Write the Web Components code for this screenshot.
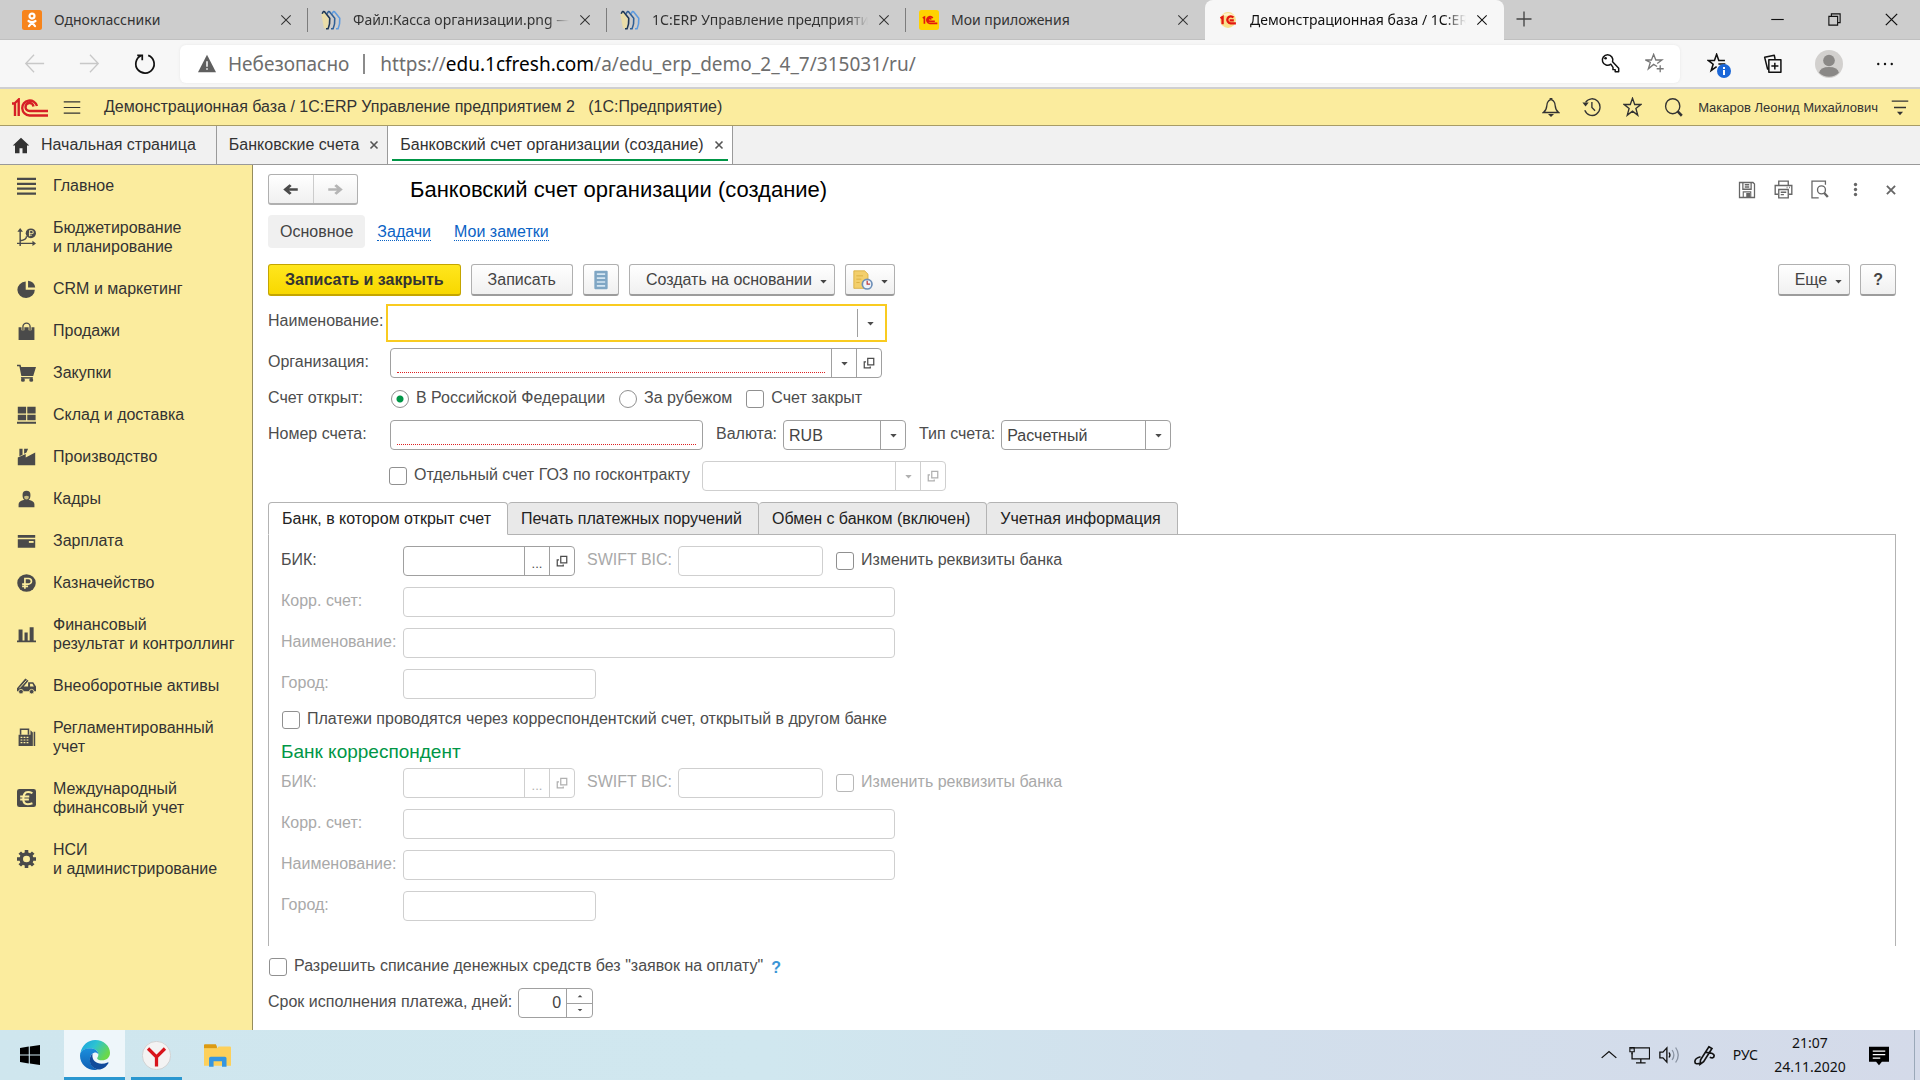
<!DOCTYPE html>
<html lang="ru">
<head>
<meta charset="utf-8">
<title>Банковский счет организации (создание)</title>
<style>
html,body{margin:0;background:#fff}
body{font-family:"Liberation Sans",Arial,sans-serif;font-size:16px;color:#333}
</style>
</head>
<body>
<desktop-screen></desktop-screen>
<script>
const ICONS = {
  ok:'<rect width="24" height="24" rx="3" fill="#f7841b"/><g fill="none" stroke="#fff" stroke-width="2.6" stroke-linecap="round"><circle cx="12" cy="7.3" r="3"/><path d="M7.8 13.2q4.2 2.6 8.4 0M12 15l-3.6 4.4M12 15l3.6 4.4"/></g>',
  books:'<path d="M.5 5.500L3 1.500l6.500 9L8 23l-4.500-1z" fill="#e9dca8"/><g fill="none" stroke-width="1.900"><path d="M1.500 4.500Q3 0 5 3l5.500 7Q11 17 8.500 22.500H6" stroke="#1d3654"/><path d="M7.500 4.500Q9 0 11 3l5.500 7Q17 17 14.500 22.500H12" stroke="#2f5f96"/><path d="M13.500 4.500Q15 0 17 3l5.500 7Q23 17 20.500 22.500H18" stroke="#5d9be0"/></g>',
  c1y:'<rect width="24" height="24" rx="3" fill="#ffd200"/><g fill="none" stroke="#e3170f" stroke-width="2"><path d="M4.500 9.500l2-1v8M16.500 9.500a4 4 0 1 0-3.500 6.500h9M14.500 11.300a1.700 1.700 0 1 0-1.500 2.200h6"/></g>',
  c1r:'<circle cx="12" cy="12" r="9.500" fill="#f8e08b"/><path d="M4 7q8-7 16 0z" fill="#fff5cd"/><g fill="none" stroke="#e3170f" stroke-width="2.800"><path d="M3 10l2.500-1.500v8.500M18.500 9a4.200 4.200 0 1 0-3.500 7h6.500M14 12.500h5"/></g>',
  x:'<path d="M4 4l16 16M20 4L4 20" stroke="currentColor" stroke-width="1.800" fill="none"/>',
  xb:'<path d="M5 5l14 14M19 5L5 19" stroke="currentColor" stroke-width="3.200" fill="none"/>',
  plus:'<path d="M12 2v20M2 12h20" stroke="currentColor" stroke-width="1.800"/>',
  min:'<path d="M2 12h20" stroke="currentColor" stroke-width="1.800"/>',
  restore:'<path d="M3 7h14v14H3zM7 7V3h14v14h-4" stroke="currentColor" stroke-width="1.800" fill="none"/>',
  back:'<path d="M23 12H2M11.500 2L2 12l9.500 10" stroke="currentColor" stroke-width="1.500" fill="none"/>',
  fwd:'<path d="M1 12h21M12.500 2L22 12l-9.500 10" stroke="currentColor" stroke-width="1.500" fill="none"/>',
  reload:'<path d="M15.500 2.600A10 10 0 1 1 7.500 3M3.500 2.500h5.500v5.500" stroke="currentColor" stroke-width="1.900" fill="none"/>',
  warn:'<path d="M12 1l12 22H0z" fill="#5f5f5f"/><path d="M12 9v7M12 18v2" stroke="#fff" stroke-width="2"/>',
  key:'<path d="M13.500 12.800a6 6 0 1 1 2-2.800l7 7.500v4h-4v-2.500h-2.500v-2.500z" stroke="currentColor" stroke-width="1.700" fill="none" stroke-linejoin="round"/><circle cx="7.500" cy="6" r="1.500" fill="currentColor"/>',
  starplus:'<path d="M15 15.500l-4-2.500-6 5 2.200-7.200L1.500 8h7L11 1.500 13.500 8h7l-5.400 4M18.500 14v8M14.500 18h8" stroke="currentColor" stroke-width="1.500" fill="none"/>',
  starlines:'<path d="M11 15.500L4.800 20 7 12.800 1.500 8.500h7L11 1.500l2.500 7h7M13 12.500h8M14 16h7" stroke="currentColor" stroke-width="1.800" fill="none"/>',
  coll:'<path d="M7 18H5.500L2 4l11.500-2.500L14.500 6M7 7h14.500v15H7zM14.200 10.500v8M10 14.500h8.500" stroke="currentColor" stroke-width="1.800" fill="none" stroke-linejoin="round"/>',
  avatar:'<circle cx="12" cy="12" r="12" fill="#d2d0ce"/><circle cx="12" cy="9" r="5" fill="#8a8886"/><path d="M3.500 19.500q1-5 8.500-5t8.500 5a12 12 0 0 1-17 0z" fill="#8a8886"/>',
  dots:'<g fill="currentColor"><circle cx="3" cy="12" r="1.600"/><circle cx="12" cy="12" r="1.600"/><circle cx="21" cy="12" r="1.600"/></g>',
  burger:'<path d="M1 3h22M1 12h22M1 21h22" stroke="currentColor" stroke-width="1.900"/>',
  bell:'<path d="M2 18.500h20c-3-2-4-3.500-4.500-8.500S14.500 4 13 3.500V2h-2v1.500C9.500 4 7 5 6.500 10S5 16.500 2 18.500z" stroke="currentColor" stroke-width="1.700" fill="none"/><path d="M8 20.500h8L12 24z" fill="currentColor"/>',
  history:'<path d="M4.500 6.500A10 10 0 1 1 3.500 16M12.500 6v6.500l4 4" stroke="currentColor" stroke-width="1.700" fill="none"/><path d="M.5 6.500l8 0-4 5z" fill="currentColor"/>',
  star:'<path d="M12 1.500l2.800 7.500h7.700l-6.200 4.800 2.300 8L12 17l-6.600 4.800 2.300-8L1.500 9h7.700z" stroke="currentColor" stroke-width="1.700" fill="none"/>',
  search:'<circle cx="11" cy="11" r="9" stroke="currentColor" stroke-width="1.700" fill="none"/><path d="M17 17l5.500 5.500" stroke="currentColor" stroke-width="3.200"/>',
  menu:'<path d="M1 3h22M4 12h16" stroke="currentColor" stroke-width="1.900"/><path d="M8 18h8l-4 5z" fill="currentColor"/>',
  home:'<path d="M12 1l11 11h-3v11h-6v-7h-4v7H4V12H1z" fill="currentColor"/>',
  larrow:'<path d="M21 12H6M11.500 5L4.500 12l7 7" stroke="currentColor" stroke-width="4" fill="none"/>',
  rarrow:'<path d="M3 12h15M12.500 5l7 7-7 7" stroke="currentColor" stroke-width="4" fill="none"/>',
  floppy:'<path d="M2 2h18l2 2v18H2zM6.500 2v9h11V2M9 5h6M9 8h6" stroke="currentColor" stroke-width="1.700" fill="none"/><path d="M7 14.500h10V22H7z" fill="none" stroke="currentColor" stroke-width="1.500"/><path d="M11 16h5v6h-5z" fill="currentColor"/>',
  print:'<path d="M6 7V1.500h12V7M5 18H1.500V7h21v11H19M6 12h12v10.500H6zM8.500 15.500h7M8.500 18.500h4M16 9.500h1M19 9.500h1" stroke="currentColor" stroke-width="1.700" fill="none"/>',
  preview:'<path d="M11 22.500H2.500v-21h17V6" stroke="currentColor" stroke-width="1.600" fill="none"/><circle cx="14.500" cy="12.500" r="5" stroke="currentColor" stroke-width="1.700" fill="none"/><path d="M18 16.500l4.500 5" stroke="currentColor" stroke-width="3"/>',
  vdots:'<g fill="currentColor"><circle cx="12" cy="4" r="2.700"/><circle cx="12" cy="12" r="2.700"/><circle cx="12" cy="20" r="2.700"/></g>',
  list:'<rect x="4" y="1" width="16" height="22" rx="1" fill="#7fa6c4"/><path d="M7 5h10M7 9.700h10M7 14.400h10M7 19h10" stroke="#d5e6f2" stroke-width="2"/>',
  docclock:'<path d="M1 1h13l4 4v17H1z" fill="#f3cf6c" stroke="#d9ac3c"/><path d="M4 7h8M4 11h6M4 15h4" stroke="#d9ac3c"/><circle cx="17" cy="17" r="5.800" fill="#eef4fb" stroke="#6d8fb8" stroke-width="2"/><path d="M17 13v4h3.500" stroke="#c03a3a" stroke-width="1.500" fill="none"/>',
  down:'<path d="M5 8h14l-7 9z" fill="currentColor"/>',
  up:'<path d="M5 17h14l-7-9z" fill="currentColor"/>',
  open:'<path d="M9.500 2.500h12v13h-12zM6 9.500H2.500v12h12V19" stroke="currentColor" stroke-width="2.500" fill="none"/>',
  main:'<path d="M0 2.500h24M0 9h24M0 15.500h24M0 22h24" stroke="currentColor" stroke-width="3"/>',
  budget:'<path d="M4 3v21M0 20.500h21M4 17q8-1 8-6" stroke="currentColor" stroke-width="1.800" fill="none"/><path d="M.5 5L4 0l3.500 5zM19.500 17l4.500 3.500-4.500 3.500z" fill="currentColor"/><circle cx="17.500" cy="7" r="6.500" fill="currentColor"/><path d="M16 11V3.500h2.500a2 2 0 0 1 0 4H15M15 9.500h4" stroke="#fbec9e" stroke-width="1.300" fill="none"/>',
  pie:'<path d="M11 2v11h11.500A11 11 0 1 1 11 2z" fill="currentColor"/><path d="M14 1q8 1 9 9h-9z" fill="currentColor"/>',
  bag:'<path d="M2 7h20v17H2z" fill="currentColor"/><path d="M7.500 11V6a4.500 4.500 0 0 1 9 0v5" stroke="#fbec9e" stroke-width="3.600" fill="none"/><path d="M7.500 10.500V6a4.500 4.500 0 0 1 9 0v4.500" stroke="currentColor" stroke-width="1.700" fill="none"/>',
  cart:'<path d="M0 1h4.500l.8 3H24l-3.500 12H5.500L3 3H0z" fill="currentColor"/><path d="M5 17.500h15v2H5z" fill="currentColor"/><circle cx="7.500" cy="21.200" r="2.500" fill="currentColor"/><circle cx="18" cy="21.200" r="2.500" fill="currentColor"/>',
  store:'<path d="M1 1h10.500v9H1zM13 1h10.500v9H13zM1 11.500h10.500V19H1zM13 11.500h10.500V19H13zM0 21h24v2.500H0z" fill="currentColor"/>',
  factory:'<path d="M1 23V12.500l10-4.500v4.500L23 6v17zM3 1h4v8l-4 2zM9 1h5l-2 5-3 1.500z" fill="currentColor"/>',
  person:'<path d="M12 1q5 0 5 5.500T14.500 13q7.500 1.500 7.500 6v4H2v-4q0-4.500 7.500-6Q7 12 7 6.500T12 1z" fill="currentColor"/><path d="M9 8.500q0 4 3 4t3-4q-3-2-6 0" fill="#c9bd80"/>',
  card:'<path d="M1 4h22v3.500H1zM1 9.500h22V21H1z" fill="currentColor"/><path d="M15 12h6v2.500h-6z" fill="#fbec9e"/>',
  rub:'<circle cx="12" cy="12" r="11.700" fill="currentColor"/><path d="M10 19.500V6h4.500a3.700 3.700 0 0 1 0 7.500H6.500M6.500 16.500H14" stroke="#fbec9e" stroke-width="2.100" fill="none"/>',
  bars:'<path d="M0 20.500h24V23H0zM2 6h5v15H2zM9.500 10h4v11h-4zM16 3h5v18h-5z" fill="currentColor"/>',
  truck:'<path d="M0 15L10.500 2l4 3-6 7.500H14V7h6.500l3.500 5.500V19H0zM16.500 9v3.500h4.800L19.500 9z" fill="currentColor" fill-rule="evenodd"/><path d="M3 15L12 4.500" stroke="#fbec9e" stroke-width="1.200"/><circle cx="5" cy="19.500" r="3" fill="currentColor" stroke="#fbec9e"/><circle cx="18.500" cy="19.500" r="3" fill="currentColor" stroke="#fbec9e"/>',
  calc:'<path d="M2 9h15V3l3 3v18H2z" fill="currentColor"/><path d="M4.500 9V1.500h10V9" stroke="currentColor" stroke-width="2" fill="none"/><path d="M21 5h2v19h-2z" fill="currentColor"/><path d="M4.500 12.500h11M4.500 16h11M4.500 19.500h11" stroke="#fbec9e" stroke-width="1.500" stroke-dasharray="2.300 1.500"/>',
  euro:'<rect width="24" height="24" rx="3" fill="currentColor"/><path d="M19.500 5.500Q9 .5 8 12t11.500 7M4 10h11.500M4 14h11" stroke="#fbec9e" stroke-width="2.600" fill="none"/>',
  gear:'<circle cx="12" cy="12" r="6.700" fill="none" stroke="currentColor" stroke-width="4.600"/><path d="M12 0v5M12 19v5M0 12h5M19 12h5M3.500 3.500L7 7M17 17l3.500 3.500M20.500 3.500L17 7M7 17l-3.500 3.500" stroke="currentColor" stroke-width="4.500"/>',
  win:'<path d="M0 3.500l10.500-1.600V11.400H0zM11.800 1.700L24 0v11.400H11.800zM0 12.600h10.500v9.500L0 20.500zM11.800 12.600H24V24l-12.200-1.700z" fill="#000"/>',
  edge:'<defs><linearGradient id="g1" x1="0" y1="0" x2="1" y2=".5"><stop offset="0" stop-color="#1b9de2"/><stop offset=".5" stop-color="#2cc3d2"/><stop offset="1" stop-color="#6ad84a"/></linearGradient><linearGradient id="g2" x1="0" y1="0" x2="0" y2="1"><stop offset="0" stop-color="#1b8fdd"/><stop offset="1" stop-color="#0f5fb4"/></linearGradient></defs><path d="M.3 10.500C1.500 4 6.500 0 12.200 0 19 0 24 5 24 10.200c0 4-3 6-6.300 6-2.600 0-4-.9-4-1.700 0-.5 1-1.200 1-3C14.700 8.500 11.500 6.500 8 6.500S1.300 8.500.3 10.500z" fill="url(#g1)"/><path d="M.2 10.500C1.500 8 4.500 6.500 8 6.500c3.800 0 6.700 2.200 6.700 4.700-.8-1-2-1.400-3-1.200-3 .7-4.500 4-3.500 7.500 1 3.800 4.200 5.800 6.800 6.100C8 25.500 0 20.500 0 12.500z" fill="url(#g2)"/><path d="M10 11c-4 3-2.500 12 5 12.600 3 0 6-2 7.700-5 .3-.6-.2-.9-.6-.7C16.500 20.500 9 18.500 10 11z" fill="#114a9b"/>',
  yandex:'<circle cx="12" cy="12" r="11.700" fill="#f3f3f3" stroke="#c8c8c8" stroke-width=".6"/><path d="M5 6.200l7 7 7-7M12 13v8" stroke="#d8141c" stroke-width="2.700" fill="none"/>',
  folder:'<path d="M0 2.500Q0 2 1 2h9.500l1 2v2H0z" fill="#dc9a12"/><path d="M0 5.500h11.500l1.500-1.500h10q1 0 1 1V21H0z" fill="#fdd05a"/><path d="M4.500 22v-7.500q0-1.500 1.500-1.500h12.500q1.500 0 1.500 1.500V22h-4v-5H8.500v5z" fill="#3596e0"/>',
  chev:'<path d="M1 17L12 6l11 11" stroke="currentColor" stroke-width="1.900" fill="none"/>',
  monitor:'<path d="M6 3.500h17.500v13H3.500V9M13.500 16.500v4.500M8 21.500h11" stroke="currentColor" stroke-width="1.500" fill="none"/><path d="M1 3h5v5H1zM3.500 8v3M2.500 3v2M4.500 3v2" stroke="currentColor" stroke-width="1.300" fill="none"/>',
  speaker:'<path d="M1 8.500h3.500L9 3.500v17l-4.500-5H1zM11.500 9q2 3 0 6" stroke="currentColor" stroke-width="1.500" fill="none"/><path d="M15 6q4 6 0 12M19 3q6 9 0 18" stroke="#8a94a3" stroke-width="1.500" fill="none"/>',
  pen:'<path d="M17 2l3.500 2L11 19l-4 3 .5-5zM13.500 8.500q10 .5 9.500 4t-5 1.500M7.500 13.500Q1 15 1 19t7 1.500" stroke="currentColor" stroke-width="1.900" fill="none"/>',
  notice:'<path d="M0 2h24v17h-8.500L12 23l-3.500-4H0z" fill="#000"/><path d="M4.500 7h15M4.500 11h15M4.500 15h9" stroke="#fff" stroke-width="1.300"/>'
};

/* Registers an element whose shadow markup comes from view(element). */
function component(tag, css, view, ready) {
  customElements.define(tag, class extends HTMLElement {
    connectedCallback() {
      if (this.shadowRoot) return;
      const root = this.attachShadow({ mode: 'open' });
      root.innerHTML = `<style>*{box-sizing:border-box}${css}</style>${view(this)}`;
      if (ready) ready(this, root);
    }
  });
}
const attr = (el, name, fallback = '') => el.hasAttribute(name) ? el.getAttribute(name) : fallback;
const icon = (name, w, h = w) => `<ui-icon name="${name}" w="${w}" h="${h}"></ui-icon>`;

component('ui-icon', ':host{display:inline-flex;flex:none}svg{display:block}', el =>
  `<svg width="${attr(el, 'w', 16)}" height="${attr(el, 'h', 16)}" viewBox="0 0 24 24" preserveAspectRatio="none" aria-hidden="true">${ICONS[attr(el, 'name')]}</svg>`);

component('brand-logo', ':host{display:inline-flex;flex:none}', () =>
  `<svg width="36" height="19" viewBox="0 0 36 19" fill="none" stroke="#d61f26" stroke-width="2.400" role="img" aria-label="1С"><path d="M0 5.500h3V18M3 5L6.700 1.500V18M25 8A7.500 7.500 0 1 0 17.500 17.500H36M21.500 8.500A4 4 0 1 0 17.500 13H36"/></svg>`);

/* ---------- browser chrome ---------- */
component('browser-tab', `
:host{display:flex;align-items:center;width:299px;height:40px;padding:0 11px 0 13px;position:relative;color:#333;flex:0 1 299px;min-width:0}
:host([active]){background:#f7f7f7;border-radius:8px 8px 0 0;color:#111}
:host([divider])::after{content:"";position:absolute;right:0;top:8px;height:24px;width:1px;background:#7c7c7c}
.t{flex:1;min-width:0;overflow:hidden;white-space:nowrap;margin:0 5px 0 12px;line-height:22px}
:host([fade]) .t{-webkit-mask-image:linear-gradient(90deg,#000 90%,transparent);mask-image:linear-gradient(90deg,#000 90%,transparent)}
button{all:unset;display:flex;padding:4px}`, el =>
  `${icon(attr(el, 'icon'), 20)}<span class="t"><slot></slot></span><button aria-label="Закрыть вкладку">${icon('x', 14)}</button>`);

component('browser-tabs', `
:host{display:flex;align-items:stretch;height:40px;background:#cdcdcd;padding-left:9px;font:14px/20px "Noto Sans","Open Sans",sans-serif;box-shadow:inset 0 -1px #c0c0c0}
button{all:unset;display:flex;align-items:center;justify-content:center;color:#111}
.add{width:40px;color:#444;height:38px}.w{width:57px;height:38px}.sp{flex:1}`, () => `
<browser-tab icon="ok" divider>Одноклассники</browser-tab>
<browser-tab icon="books" divider fade>Файл:Касса организации.png —</browser-tab>
<browser-tab icon="books" divider fade>1С:ERP Управление предприяти</browser-tab>
<browser-tab icon="c1y">Мои приложения</browser-tab>
<browser-tab icon="c1r" active fade>Демонстрационная база / 1С:ERP</browser-tab>
<button class="add" aria-label="Новая вкладка">${icon('plus', 18)}</button><span class="sp"></span>
<button class="w" aria-label="Свернуть">${icon('min', 15)}</button>
<button class="w" aria-label="Восстановить">${icon('restore', 15)}</button>
<button class="w" aria-label="Закрыть">${icon('x', 17)}</button>`);

component('address-bar', `
:host{display:flex;align-items:center;height:49px;background:#f7f7f7;border-bottom:2px solid #cfcfd1;font:19px/26px "Noto Sans","Open Sans",sans-serif;color:#6e6e6e}
button{all:unset;display:flex;align-items:center;justify-content:center;width:55px;height:38px;color:#111;position:relative}
button[disabled]{color:#c8c8c8}
.nav{display:flex;padding-left:7px;width:180px}
.box{flex:1;display:flex;align-items:center;height:38px;background:#fff;border-radius:6px;padding:0 3px 0 18px;white-space:nowrap;box-shadow:0 0 3px #e6e6e6}
.safe{margin:0 14px 0 12px}.bar{width:2px;height:20px;background:#8b8b8b;margin-right:15px}
.url{flex:1}.url b{font-weight:400;color:#000}
.box button{width:45px}
.ext{display:flex;padding-left:9px;width:240px}.ext button{width:56px}
.badge{position:absolute;left:28px;top:19px;width:14px;height:14px;border-radius:7px;background:#1b67d8;display:flex;justify-content:center}
.badge::before{content:"";width:2px;height:8px;margin-top:3px;background:linear-gradient(#fff 2px,transparent 2px 3px,#fff 3px)}`, () => `
<div class="nav"><button disabled aria-label="Назад">${icon('back', 21)}</button><button disabled aria-label="Вперед">${icon('fwd', 21)}</button><button aria-label="Обновить">${icon('reload', 22)}</button></div>
<div class="box">${icon('warn', 18, 19)}<span class="safe">Небезопасно</span><span class="bar"></span><span class="url">https://<b>edu.1cfresh.com</b>/a/edu_erp_demo_2_4_7/315031/ru/</span>
<button aria-label="Пароль">${icon('key', 21)}</button><button aria-label="В избранное" style="color:#777">${icon('starplus', 21)}</button></div>
<div class="ext"><button aria-label="Избранное">${icon('starlines', 21)}<span class="badge"></span></button><button aria-label="Коллекции">${icon('coll', 20)}</button><button aria-label="Профиль">${icon('avatar', 28)}</button><button aria-label="Меню">${icon('dots', 18)}</button></div>`);

/* ---------- application header ---------- */
component('app-header', `
:host{display:flex;align-items:center;height:37px;background:#fbec9e;border-bottom:1px solid #a89c66;padding:0 11px 0 12px;color:#333}
button{all:unset;display:flex;justify-content:center;width:41px}
.m{width:18px;margin:0 23px 0 15px}.t{flex:1;white-space:pre}
.u{font-size:13px;margin:0 13px 0 4px}.e{width:18px}`, () => `
<brand-logo></brand-logo><button class="m" aria-label="Меню">${icon('burger', 18, 15)}</button>
<span class="t">Демонстрационная база / 1С:ERP Управление предприятием 2   (1С:Предприятие)</span>
<button aria-label="Уведомления">${icon('bell', 18, 20)}</button><button aria-label="История">${icon('history', 19, 20)}</button><button aria-label="Избранное">${icon('star', 19, 20)}</button><button aria-label="Поиск">${icon('search', 19, 20)}</button>
<span class="u">Макаров Леонид Михайлович</span><button class="e" aria-label="Сервис">${icon('menu', 18, 17)}</button>`);

component('app-tab', `
:host{display:flex;align-items:center;padding:0 12px;border-right:1px solid #9a9a9a;gap:13px;position:relative;white-space:nowrap}
:host([home]){padding-right:20px;gap:11px}
:host([active]){background:#fff}
:host([active])::after{content:"";position:absolute;left:4px;right:4px;bottom:3px;height:2px;background:#009646}
:host([closable]){padding-right:5px}
a{color:inherit;text-decoration:none}
button{all:unset;display:flex;padding:2px;color:#555;margin-left:-6px}`, el => `
${el.hasAttribute('home') ? icon('home', 18, 17) : ''}<a href="#"><slot></slot></a>${el.hasAttribute('closable') ? `<button aria-label="Закрыть">${icon('xb', 12)}</button>` : ''}`);

component('app-tabs', `:host{display:flex;height:39px;background:#f1f1f1;border-bottom:1px solid #999}`, () => `
<app-tab home>Начальная страница</app-tab><app-tab closable>Банковские счета</app-tab><app-tab closable active>Банковский счет организации (создание)</app-tab>`);

component('nav-item', `
:host{display:block}
a{display:flex;align-items:center;padding:11px 0 12px 17px;gap:17px;line-height:19px;color:#333;text-decoration:none;white-space:pre-line}
ui-icon{color:#4a4a4a}`, el => `<a href="#">${icon(attr(el, 'icon'), 19, 18)}<span><slot></slot></span></a>`);

component('side-nav', `:host{display:block;width:253px;flex:none;background:#fbec9e;border-right:1px solid #958c5c}`, () => `<nav>${[
  ['main', 'Главное'], ['budget', 'Бюджетирование\nи планирование'], ['pie', 'CRM и маркетинг'], ['bag', 'Продажи'], ['cart', 'Закупки'],
  ['store', 'Склад и доставка'], ['factory', 'Производство'], ['person', 'Кадры'], ['card', 'Зарплата'], ['rub', 'Казначейство'],
  ['bars', 'Финансовый\nрезультат и контроллинг'], ['truck', 'Внеоборотные активы'], ['calc', 'Регламентированный\nучет'],
  ['euro', 'Международный\nфинансовый учет'], ['gear', 'НСИ\nи администрирование']
].map(([i, t]) => `<nav-item icon="${i}">${t}</nav-item>`).join('')}</nav>`);

/* ---------- form controls ---------- */
component('push-button', `
:host{display:inline-flex}
button{font:inherit;color:#444;height:32px;width:100%;margin:0;padding:0 var(--pad,16px);border:1px solid #b0b0b0;border-bottom:2px solid #9c9c9c;border-radius:3px;background:linear-gradient(#fff,#f0f0f0);display:flex;align-items:center;justify-content:var(--justify,center);gap:8px;white-space:nowrap}
:host([primary]) button{background:linear-gradient(#ffe61e,#f8d800);border-color:#c4a500;font-weight:700;color:#333}
.d{margin:4px -11px 0 -2px}`, el =>
  `<button aria-label="${attr(el, 'hint', el.textContent)}">${el.hasAttribute('icon') ? icon(attr(el, 'icon'), 20) : ''}<slot></slot>${el.hasAttribute('drop') ? `<ui-icon class="d" name="down" w="11" h="9"></ui-icon>` : ''}</button>`);

const FIELD = `
:host{display:flex;color:#4d4d4d}
:host([disabled]){color:#a9a9a9}
label{width:var(--label,auto);padding-right:6px;line-height:27px;white-space:nowrap;flex:none}
.box{display:flex;width:var(--w,100px);height:30px;border:1px solid #a0a0a0;border-radius:4px;background:#fff;position:relative;overflow:hidden}
:host([disabled]) .box{border-color:#cfcfcf}
:host([focused]) label{line-height:25px}
:host([focused]) .box{outline:2px solid #f9cb20;outline-offset:2px;border-color:transparent;border-radius:0;overflow:visible}
input,select{appearance:none;-moz-appearance:textfield;border:0;outline:0;background:none;font:inherit;color:#444;flex:1;min-width:0;margin:0;padding:0 5px}
input::-webkit-inner-spin-button{appearance:none}
:host([required]) .in::after{content:"";position:absolute;left:6px;right:6px;bottom:4px;border-bottom:1px dotted #d22}
.in{position:relative;display:flex;flex:1;min-width:0}
button,.cell{all:unset;box-sizing:border-box;display:flex;align-items:center;justify-content:center;width:25px;border-left:1px solid #a0a0a0;color:#4d4d4d;font-size:13px}
:host([disabled]) button{border-color:#cfcfcf;color:#b0b0b0}
.spin{display:flex;flex-direction:column;width:26px;border-left:1px solid #a0a0a0}
.spin button{width:auto;flex:1;border:0}.spin button+button{border-top:1px solid #a0a0a0}`;

/* Text box with optional trailing buttons: drop, more, open. */
component('text-field', FIELD, el => {
  const parts = { drop: ['Выбрать из списка', icon('down', 11, 9)], more: ['Выбрать', '<span style="padding-top:4px">...</span>'], open: ['Открыть', icon('open', 12)] };
  const off = el.hasAttribute('disabled') ? 'disabled' : '';
  const caption = attr(el, 'label');
  return `${caption ? `<label for="i">${caption}</label>` : ''}<div class="box"><span class="in"><input id="i" type="text" ${off} ${caption ? '' : `aria-label="${attr(el, 'hint')}"`}></span>${
    attr(el, 'tools').split(' ').filter(Boolean).map(p => `<button ${off} aria-label="${parts[p][0]}">${parts[p][1]}</button>`).join('')}</div>`;
});

component('select-field', FIELD + `select{position:absolute;inset:0;width:100%}.cell{margin-left:auto}`, el =>
  `<label for="s">${attr(el, 'label')}</label><div class="box"><select id="s"><option>${attr(el, 'value')}</option></select><span class="cell">${icon('down', 11, 9)}</span></div>`);

component('number-field', FIELD + `input{text-align:right}`, el =>
  `<label for="n">${attr(el, 'label')}</label><div class="box"><input id="n" type="number" value="${attr(el, 'value', 0)}"><span class="spin"><button aria-label="Больше">${icon('up', 8, 6)}</button><button aria-label="Меньше">${icon('down', 8, 6)}</button></span></div>`,
  (el, root) => {
    const n = root.querySelector('input'), [more, less] = root.querySelectorAll('button');
    more.onclick = () => n.stepUp(); less.onclick = () => n.stepDown();
  });

const TICK = `
label{display:flex;align-items:flex-start;gap:7px;line-height:15px;white-space:nowrap}
input{appearance:none;width:18px;height:18px;border:1px solid #909090;border-radius:3px;background:#fff;margin:0;flex:none}
input[type=radio]{border-radius:9px}
input[type=radio]:checked{background:radial-gradient(#009646 0 3px,#fff 4px)}
input[type=checkbox]:checked{background:#009646;box-shadow:inset 0 0 0 3px #fff}
input:disabled{border-color:#b8b8b8}`;
component('tick-box', `:host{display:flex;color:#4d4d4d}:host([disabled]){color:#a9a9a9}` + TICK, el =>
  `<label><input type="checkbox" ${el.hasAttribute('disabled') ? 'disabled' : ''}><span><slot></slot></span></label>`);

component('radio-row', `:host{display:flex;gap:14px;color:#4d4d4d}.c{width:var(--label);line-height:15px;margin-right:-13px}` + TICK, el =>
  `<span class="c">${attr(el, 'label')}</span>${attr(el, 'options').split('|').map((o, i) =>
    `<label><input type="radio" name="r" ${i ? '' : 'checked'}><span>${o}</span></label>`).join('')}`);

/* ---------- page ---------- */
component('bank-details', `
:host{display:flex;flex-direction:column;gap:11px;--label:122px}
.r{display:flex;align-items:center}
.sw{--label:auto;--w:145px;margin:0 13px 0 12px}.bik{--w:172px}.wide{--w:492px}.city{--w:193px}`, el => {
  const off = el.hasAttribute('disabled') ? 'disabled' : '';
  return `<div class="r"><text-field class="bik" label="БИК:" tools="more open" ${off}></text-field><text-field class="sw" label="SWIFT BIC:" disabled></text-field><tick-box ${off}>Изменить реквизиты банка</tick-box></div>
<text-field class="wide" label="Корр. счет:" disabled></text-field>
<text-field class="wide" label="Наименование:" disabled></text-field>
<text-field class="city" label="Город:" disabled></text-field>`;
});

component('tab-panel', `
:host{display:flex;flex-direction:column;flex:1}
.tabs{display:flex;height:33px;position:relative}
button{all:unset;box-sizing:border-box;height:33px;padding:0 16px 0 13px;border:1px solid #b3b3b3;border-left-width:0;background:#e9e9e9;border-radius:4px 4px 0 0;color:#222;white-space:nowrap}
button[aria-selected=true]{background:#fff;border-left-width:1px;border-bottom-color:#fff}
.tabs::after{content:"";flex:1;border-bottom:1px solid #b3b3b3}
.body{flex:1;border:1px solid #b3b3b3;border-width:0 1px;padding:11px 12px}`, el =>
  `<div class="tabs" role="tablist">${attr(el, 'tabs').split('|').map((t, i) => `<button role="tab" aria-selected="${!i}">${t}</button>`).join('')}</div><div class="body"><slot></slot></div>`);

component('account-form', `
:host{display:flex;flex-direction:column;flex:1;min-width:0;padding:9px 24px 12px 15px;background:#fff}
.r{display:flex;align-items:center}
.head{height:31px}
.hist{display:flex;border:1px solid #b0b0b0;border-bottom-width:2px;border-radius:3px;height:31px;width:90px;background:linear-gradient(#fff,#f0f0f0)}
.hist button,.acts button{all:unset;display:flex;flex:1;align-items:center;justify-content:center;color:#4a4a4a}
.hist button+button{border-left:1px solid #ccc;color:#b5b5b5}
h1{font-weight:400;font-size:22px;line-height:26px;margin:0 0 0 52px;color:#000;flex:1}
.acts{display:flex;margin-right:-13px}.acts button{width:36px;flex:none;color:#666}
.links{margin-top:10px;height:33px;gap:23px}
.cur{background:#f0f0f0;border-radius:4px;padding:0 12px;line-height:33px;margin-right:-11px;color:#444}
.links a{color:#0b63c5;text-decoration:none;border-bottom:1px dotted #0b63c5;line-height:17px}
.bar{margin-top:16px;gap:10px}.bar .more{margin-left:auto}
.f{--label:122px}
.name{margin-top:12px;--w:493px}.org{margin-top:10px;--w:492px}
.open{margin-top:12px;gap:14px}.num{margin-top:12px;gap:13px}.goz{margin-top:11px;padding-left:121px;gap:12px}
.num :nth-child(1){--w:313px}
.cur-s{--w:123px;--label:auto}.typ{--w:170px;--label:auto}
tab-panel{margin-top:11px}
.via{margin:12px 0 12px 1px}
h2{font-weight:400;font-size:19px;line-height:21px;margin:0 0 6px;color:#009646}
.allow{margin-top:12px;padding-left:1px;gap:8px;line-height:17px}.allow a{color:#3a95d6;font-weight:700;text-decoration:none}
.term{margin-top:12px;--w:75px}`, () => `
<div class="r head"><div class="hist"><button aria-label="Назад">${icon('larrow', 18, 15)}</button><button aria-label="Вперед">${icon('rarrow', 18, 15)}</button></div>
<h1>Банковский счет организации (создание)</h1>
<div class="acts"><button aria-label="Сохранить">${icon('floppy', 18)}</button><button aria-label="Печать">${icon('print', 19)}</button><button aria-label="Просмотр">${icon('preview', 19)}</button><button aria-label="Действия">${icon('vdots', 15)}</button><button aria-label="Закрыть">${icon('xb', 14)}</button></div></div>
<nav class="r links"><span class="cur">Основное</span><a href="#">Задачи</a><a href="#">Мои заметки</a></nav>
<div class="r bar"><push-button primary>Записать и закрыть</push-button><push-button>Записать</push-button><push-button icon="list" hint="Список" style="--pad:7px"></push-button><push-button drop>Создать на основании</push-button><push-button icon="docclock" hint="Напоминание" drop style="--pad:7px;--justify:flex-start;width:50px"></push-button><push-button drop class="more">Еще</push-button><push-button style="--pad:12px"><b>?</b></push-button></div>
<text-field class="f name" label="Наименование:" tools="drop" focused></text-field>
<text-field class="f org" label="Организация:" tools="drop open" required></text-field>
<div class="r open"><radio-row class="f" label="Счет открыт:" options="В Российской Федерации|За рубежом"></radio-row><tick-box>Счет закрыт</tick-box></div>
<div class="r num"><text-field class="f" label="Номер счета:" required></text-field><select-field class="cur-s" label="Валюта:" value="RUB"></select-field><select-field class="typ" label="Тип счета:" value="Расчетный"></select-field></div>
<div class="r goz"><tick-box>Отдельный счет ГОЗ по госконтракту</tick-box><text-field hint="Госконтракт" tools="drop open" disabled style="--w:244px"></text-field></div>
<tab-panel tabs="Банк, в котором открыт счет|Печать платежных поручений|Обмен с банком (включен)|Учетная информация">
<bank-details></bank-details>
<tick-box class="via">Платежи проводятся через корреспондентский счет, открытый в другом банке</tick-box>
<h2>Банк корреспондент</h2>
<bank-details disabled></bank-details>
</tab-panel>
<div class="r allow"><tick-box>Разрешить списание денежных средств без "заявок на оплату"</tick-box><a href="#">?</a></div>
<number-field class="term" label="Срок исполнения платежа, дней:" value="0"></number-field>`);

component('task-bar', `
:host{display:flex;height:50px;background:linear-gradient(90deg,#cfe6ee,#d0e7ef 40%,#d2dfec 65%,#d4dae9);font:14px/24px "Noto Sans","Open Sans",sans-serif;color:#111}
button{all:unset;box-sizing:border-box;display:flex;align-items:center;justify-content:center;flex:none}
.s{width:60px;margin-right:4px}
.app{width:51px;border-bottom:3px solid #2a97d0;padding-top:3px;margin-left:6px}
.on{width:61px;background:#eef6fa;margin:0}
.f{width:70px}
.sp{flex:1}
.tray{display:flex;align-items:center}.tray button{width:33px;height:50px}
.lang{margin:0 14px 0 10px;line-height:50px}
.clock{text-align:center;padding-top:1px;width:76px;margin-right:15px}
.end{border-left:1px solid #9aa8b8;width:6px;margin-left:19px}`, () => `
<button class="s" aria-label="Пуск">${icon('win', 20)}</button><button class="app on" aria-label="Edge">${icon('edge', 30)}</button><button class="app" aria-label="Яндекс">${icon('yandex', 29)}</button><button class="f" aria-label="Проводник">${icon('folder', 27)}</button><span class="sp"></span>
<div class="tray"><button aria-label="Показать значки">${icon('chev', 16, 14)}</button><button style="width:27px" aria-label="Сеть">${icon('monitor', 21, 20)}</button><button aria-label="Громкость">${icon('speaker', 21, 20)}</button><button style="width:37px" aria-label="Перо">${icon('pen', 21)}</button></div>
<span class="lang">РУС</span><div class="clock">21:07<br>24.11.2020</div><button style="width:32px" aria-label="Уведомления">${icon('notice', 20, 21)}</button><span class="end"></span>`);

component('desktop-screen', `:host{display:flex;flex-direction:column;min-height:100vh}.main{display:flex;flex:1}`, () => `
<browser-tabs></browser-tabs><address-bar></address-bar><app-header></app-header><app-tabs></app-tabs>
<div class="main"><side-nav></side-nav><account-form></account-form></div><task-bar></task-bar>`);
</script>
</body>
</html>
